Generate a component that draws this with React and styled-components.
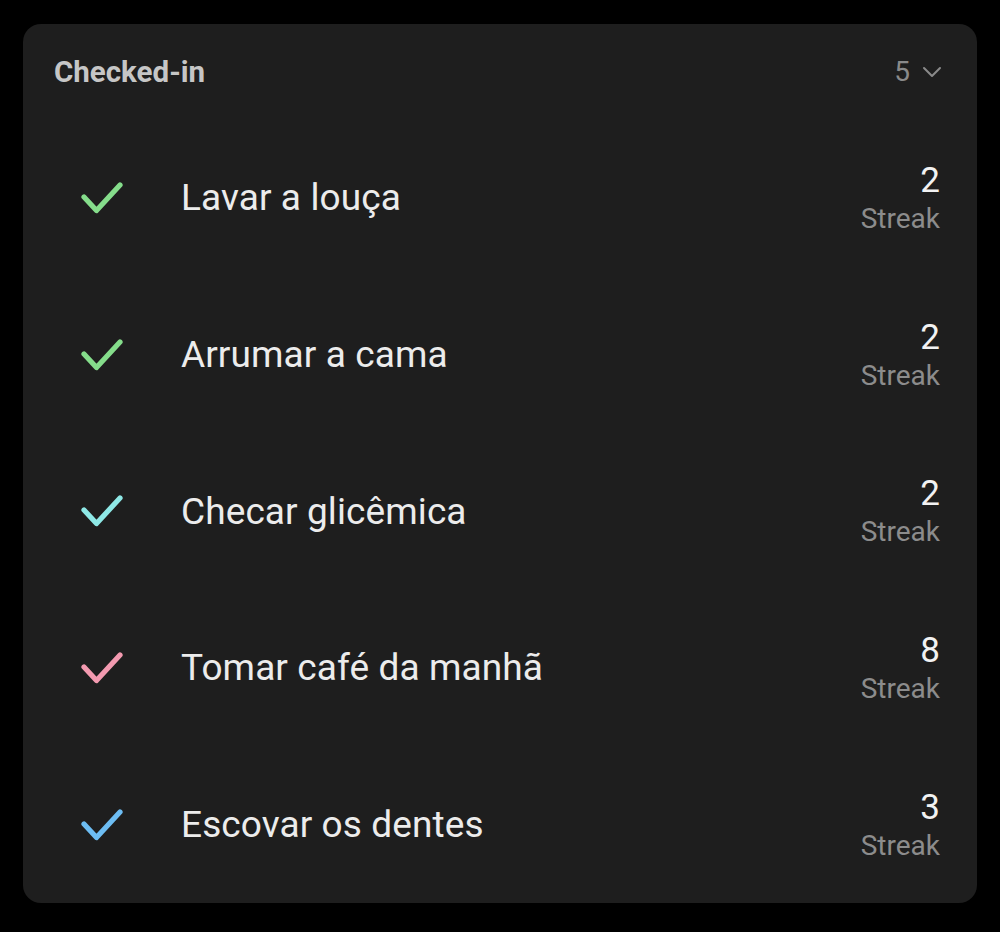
import React from "react";
import styled, { createGlobalStyle } from "styled-components";

const Global = createGlobalStyle`
  html, body {
    margin: 0;
    background: #000;
  }
  body {
    font-family: Roboto, "Noto Sans", sans-serif;
  }
`;

const Page = styled.div`
  width: 1000px;
  height: 932px;
  padding: 24px 23px 29px 23px;
  box-sizing: border-box;
  background: #000;
`;

const Card = styled.div`
  background: #1e1e1e;
  border-radius: 18px;
  height: 100%;
  display: flex;
  flex-direction: column;
`;

const Header = styled.div`
  display: flex;
  justify-content: space-between;
  align-items: center;
  height: 96px;
  padding: 0 35px 0 31px;
  box-sizing: border-box;
`;

const Title = styled.h2`
  margin: 0;
  font-size: 29.5px;
  font-weight: 700;
  color: #c6c6c6;
`;

const Count = styled.div`
  display: flex;
  align-items: center;
  gap: 12px;
  color: #8a8a8a;
  font-size: 28px;
`;

const Row = styled.div`
  display: flex;
  align-items: center;
  height: 157.5px;
  padding: 0 37px 0 58px;
`;

const Check = styled.svg`
  width: 42px;
  height: 36px;
  flex: none;
`;

const Name = styled.div`
  flex: 1;
  margin-left: 58px;
  font-size: 37px;
  color: #ececec;
  letter-spacing: 0.1px;
`;

const Streak = styled.div`
  display: flex;
  flex-direction: column;
  align-items: flex-end;
  line-height: 1;
`;

const Number = styled.div`
  font-size: 35px;
  color: #f2f2f2;
`;

const Label = styled.div`
  margin-top: 7px;
  font-size: 28px;
  color: #8c8c8c;
`;

const habits = [
  { name: "Lavar a louça", streak: 2, color: "#85dd8b" },
  { name: "Arrumar a cama", streak: 2, color: "#85dd8b" },
  { name: "Checar glicêmica", streak: 2, color: "#8ee8e6" },
  { name: "Tomar café da manhã", streak: 8, color: "#f39ab0" },
  { name: "Escovar os dentes", streak: 3, color: "#6dbdf3" },
];

function CheckIcon({ color }) {
  return (
    <Check viewBox="0 0 42 36">
      <path
        d="M3 17 L15.5 30.5 L39 5"
        fill="none"
        stroke={color}
        strokeWidth="5.2"
        strokeLinecap="round"
        strokeLinejoin="round"
      />
    </Check>
  );
}

export default function App() {
  return (
    <Page>
      <Global />
      <Card>
        <Header>
          <Title>Checked-in</Title>
          <Count>
            <span>5</span>
            <svg width="20" height="12" viewBox="0 0 20 12">
              <path d="M2 2 L10 10 L18 2" fill="none" stroke="#8a8a8a" strokeWidth="2" strokeLinecap="round" strokeLinejoin="round" />
            </svg>
          </Count>
        </Header>
        {habits.map((h) => (
          <Row key={h.name}>
            <CheckIcon color={h.color} />
            <Name>{h.name}</Name>
            <Streak>
              <Number>{h.streak}</Number>
              <Label>Streak</Label>
            </Streak>
          </Row>
        ))}
      </Card>
    </Page>
  );
}
